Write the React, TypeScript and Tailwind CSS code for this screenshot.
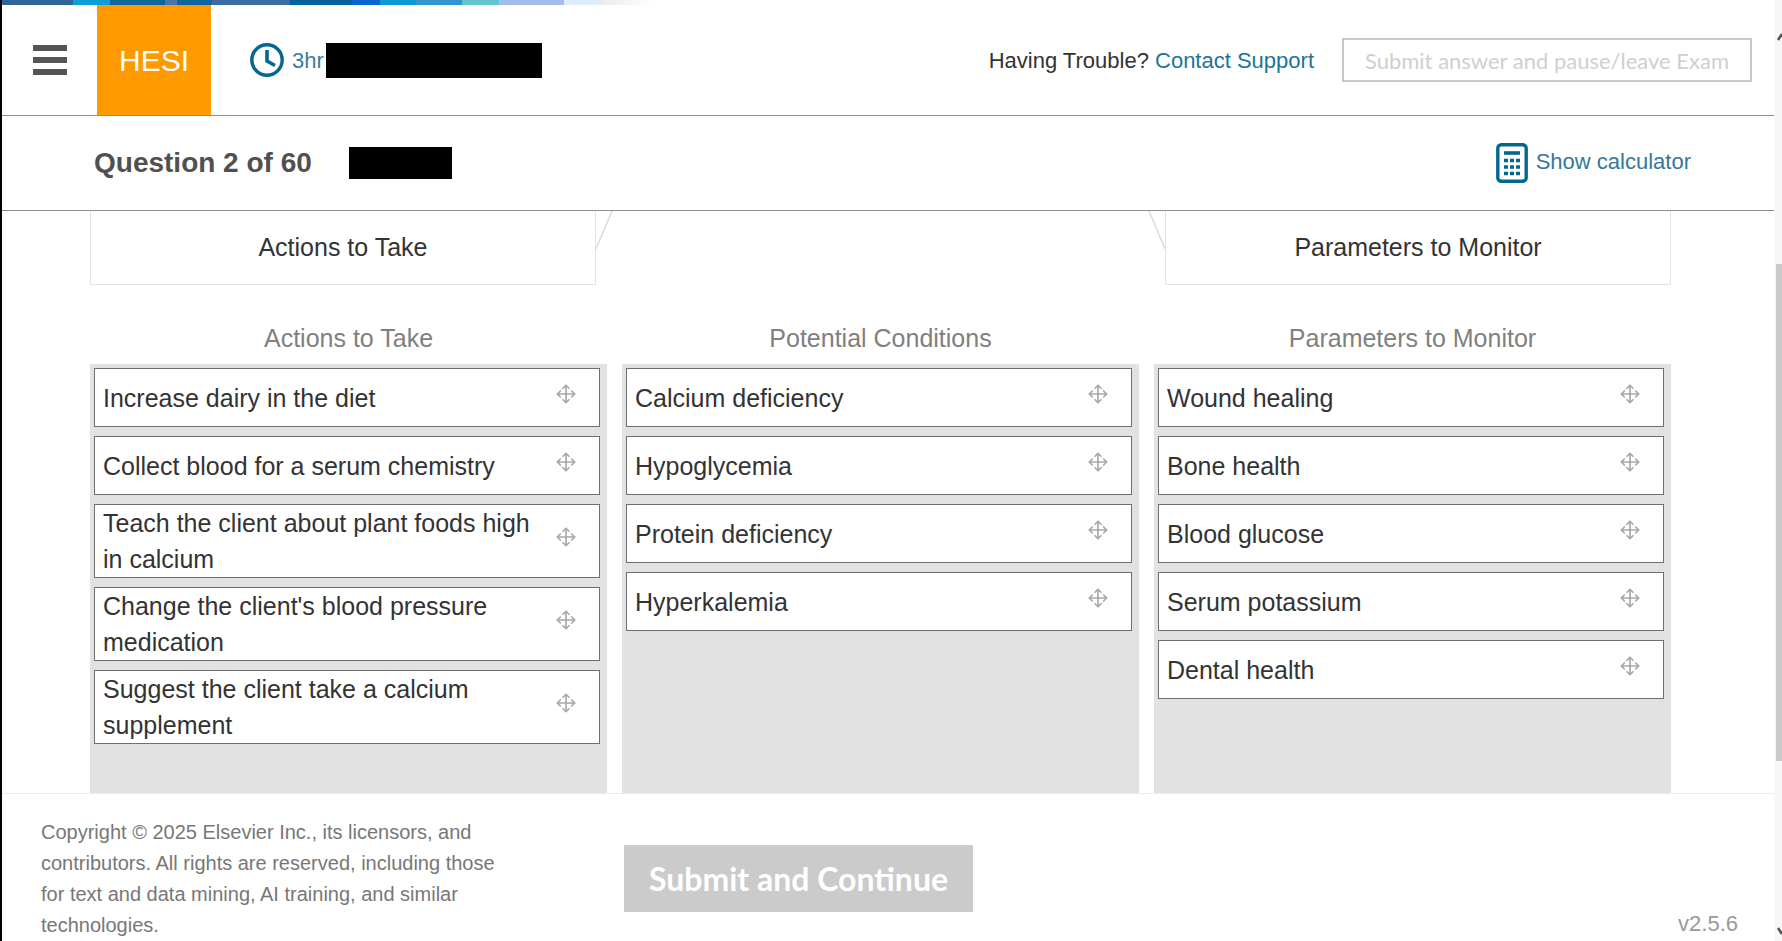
import React from "react";

const columns = [
  {
    title: "Actions to Take",
    items: [
      "Increase dairy in the diet",
      "Collect blood for a serum chemistry",
      "Teach the client about plant foods high in calcium",
      "Change the client's blood pressure medication",
      "Suggest the client take a calcium supplement",
    ],
  },
  {
    title: "Potential Conditions",
    items: ["Calcium deficiency", "Hypoglycemia", "Protein deficiency", "Hyperkalemia"],
  },
  {
    title: "Parameters to Monitor",
    items: ["Wound healing", "Bone health", "Blood glucose", "Serum potassium", "Dental health"],
  },
];

function MoveIcon() {
  return (
    <svg viewBox="0 0 20 20" className="mb-2 size-5 shrink-0" fill="none" stroke="#a6a6a6" strokeWidth="1.6" aria-hidden="true">
      <path d="M10 2v16M2 10h16" />
      <path d="M6.5 4.8 10 1.3l3.5 3.5M6.5 15.2l3.5 3.5 3.5-3.5M4.8 6.5 1.3 10l3.5 3.5M15.2 6.5l3.5 3.5-3.5 3.5" />
    </svg>
  );
}

function ClockIcon() {
  return (
    <svg viewBox="0 0 34 34" className="size-[34px]" fill="none" stroke="#04678f" aria-hidden="true">
      <circle cx="17" cy="17" r="15.2" strokeWidth="3.4" />
      <path d="M17 7v11l8 4.5" strokeWidth="3.6" />
    </svg>
  );
}

function CalculatorIcon() {
  return (
    <svg viewBox="0 0 32 40" className="h-10 w-8" fill="none" aria-hidden="true">
      <rect x="1.8" y="1.8" width="28.4" height="36.4" rx="3.5" stroke="#04678f" strokeWidth="3.4" />
      <path d="M8 10h16" stroke="#04678f" strokeWidth="3.6" />
      <path d="M8 17.5h16M8 24h16M8 30.5h16" stroke="#04678f" strokeWidth="3.4" strokeDasharray="4 2" />
    </svg>
  );
}

function TopStrip() {
  return (
    <div className="flex h-[5px] shrink-0" aria-hidden="true">
      <i className="w-[71px] bg-[#2f6599]" />
      <i className="w-[37px] bg-[#0f9fd8]" />
      <i className="w-[55px] bg-[#11659d]" />
      <i className="w-[12px] bg-[#4a75a8]" />
      <i className="w-[35px] bg-[#0f649d]" />
      <i className="w-[78px] bg-[#3c6aa3]" />
      <i className="w-[62px] bg-[#06629a]" />
      <i className="w-[28px] bg-[#0a64d2]" />
      <i className="w-[36px] bg-[#0b9ad8]" />
      <i className="w-[46px] bg-[#3394d2]" />
      <i className="w-[37px] bg-[#62c4cc]" />
      <i className="w-[65px] bg-[#a3bfe9]" />
      <i className="w-[38px] bg-[#dcedf9]" />
      <i className="w-[52px] bg-linear-to-r from-[#ececf0] to-white" />
    </div>
  );
}

function Header() {
  return (
    <header className="flex h-[111px] shrink-0 items-stretch border-b border-[#8f8f8f]">
      <button aria-label="Menu" className="ml-[31px] flex w-[34px] flex-col justify-center gap-[6px]">
        <span className="h-[6px] w-full bg-[#555]" />
        <span className="h-[6px] w-full bg-[#555]" />
        <span className="h-[6px] w-full bg-[#555]" />
      </button>
      <div className="ml-[30px] flex w-[114px] items-center justify-center bg-[#ff9900] text-[30px] text-white">HESI</div>
      <div className="ml-[39px] flex items-center gap-2 text-[22px] text-[#3b7c9c]">
        <ClockIcon />
        <span className="flex items-center gap-[2px]">
          3hr
          <span className="h-[35px] w-[216px] bg-black" />
        </span>
      </div>
      <div className="ml-auto mr-[22px] flex items-center gap-7">
        <p className="text-[22px] text-[#333]">
          Having Trouble?{" "}
          <a href="#support" className="text-[#1c7596]">
            Contact Support
          </a>
        </p>
        <button className="h-11 w-[410px] border-2 border-[#c8c8c8] font-['Lato',sans-serif] text-[22px] text-[#cfcfcf]">
          Submit answer and pause/leave Exam
        </button>
      </div>
    </header>
  );
}

function QuestionBar() {
  return (
    <div className="flex h-[95px] shrink-0 items-center border-b border-[#8f8f8f] pl-[92px] pr-[83px]">
      <h1 className="text-[28px] font-bold text-[#505050]">Question 2 of 60</h1>
      <span className="ml-[37px] h-8 w-[103px] bg-black" />
      <button className="ml-auto flex items-center gap-2 text-[22px] text-[#35789a]">
        <CalculatorIcon />
        <span className="mb-1">Show calculator</span>
      </button>
    </div>
  );
}

function Targets() {
  return (
    <div className="flex items-start text-[25px] text-[#333]">
      <div className="flex h-[74px] w-[32%] items-center justify-center border border-t-0 border-[#e4e4e4]">Actions to Take</div>
      <svg viewBox="0 0 17 40" className="h-10 w-[17px]" aria-hidden="true">
        <path d="M0 38 16 0" stroke="#dcdcdc" strokeWidth="1.5" />
      </svg>
      <svg viewBox="0 0 17 40" className="ml-auto h-10 w-[17px]" aria-hidden="true">
        <path d="M1 0 17 38" stroke="#dcdcdc" strokeWidth="1.5" />
      </svg>
      <div className="flex h-[74px] w-[32%] items-center justify-center border border-t-0 border-[#e4e4e4]">Parameters to Monitor</div>
    </div>
  );
}

function Column({ title, items }: { title: string; items: string[] }) {
  return (
    <section className="flex flex-col">
      <h2 className="mb-2 text-center text-[25px] leading-9 text-[#808080]">{title}</h2>
      <ul className="flex flex-1 flex-col gap-[9px] bg-[#e2e2e2] pb-8 pl-1 pr-[7px] pt-1">
        {items.map((item) => (
          <li
            key={item}
            draggable
            className="flex min-h-[59px] cursor-move items-center justify-between gap-3 border border-[#6f6f6f] bg-white pl-2 pr-[23px] text-[25px] leading-9 text-[#333]"
          >
            <span>{item}</span>
            <MoveIcon />
          </li>
        ))}
      </ul>
    </section>
  );
}

function Footer() {
  return (
    <footer className="flex shrink-0 items-start border-t border-[#ececec] pl-[39px] pr-9 text-[#777]">
      <p className="mt-[23px] w-[460px] text-[20px] leading-[31px]">
        Copyright © 2025 Elsevier Inc., its licensors, and contributors. All rights are reserved, including those for text and data
        mining, AI training, and similar technologies.
      </p>
      <button className="ml-[123px] mt-[51px] h-[67px] w-[349px] bg-[#cbcbcb] font-['Lato',sans-serif] text-[32px] font-bold text-white">
        Submit and Continue
      </button>
      <span className="mb-1 ml-auto self-end text-[22px] leading-[26px] text-[#999]">v2.5.6</span>
    </footer>
  );
}

function ScrollRail() {
  return (
    <div className="flex w-2 flex-col items-end bg-[#f7f7f7] pt-[30px]" aria-hidden="true">
      <svg viewBox="0 0 5 12" className="h-3 w-[5px]">
        <path d="M1 10 5 4" stroke="#505050" strokeWidth="2.5" />
      </svg>
      <div className="basis-[222px]" />
      <div className="w-[6px] basis-[497px] bg-[#c9c9c9]" />
      <svg viewBox="0 0 5 12" className="mb-1 mt-auto h-3 w-[5px]">
        <path d="M1 3 5 9" stroke="#505050" strokeWidth="2.5" />
      </svg>
    </div>
  );
}

export default function App() {
  return (
    <div className="flex h-screen border-l-2 border-black bg-white font-['Liberation_Sans',Arial,sans-serif]">
      <div className="flex min-w-0 flex-1 flex-col">
        <TopStrip />
        <Header />
        <QuestionBar />
        <main className="flex min-h-0 flex-1 flex-col overflow-hidden pl-[88px] pr-[103px]">
          <Targets />
          <div className="mt-[35px] grid flex-1 grid-cols-3 gap-[15px]">
            {columns.map((column) => (
              <Column key={column.title} {...column} />
            ))}
          </div>
        </main>
        <Footer />
      </div>
      <ScrollRail />
    </div>
  );
}
